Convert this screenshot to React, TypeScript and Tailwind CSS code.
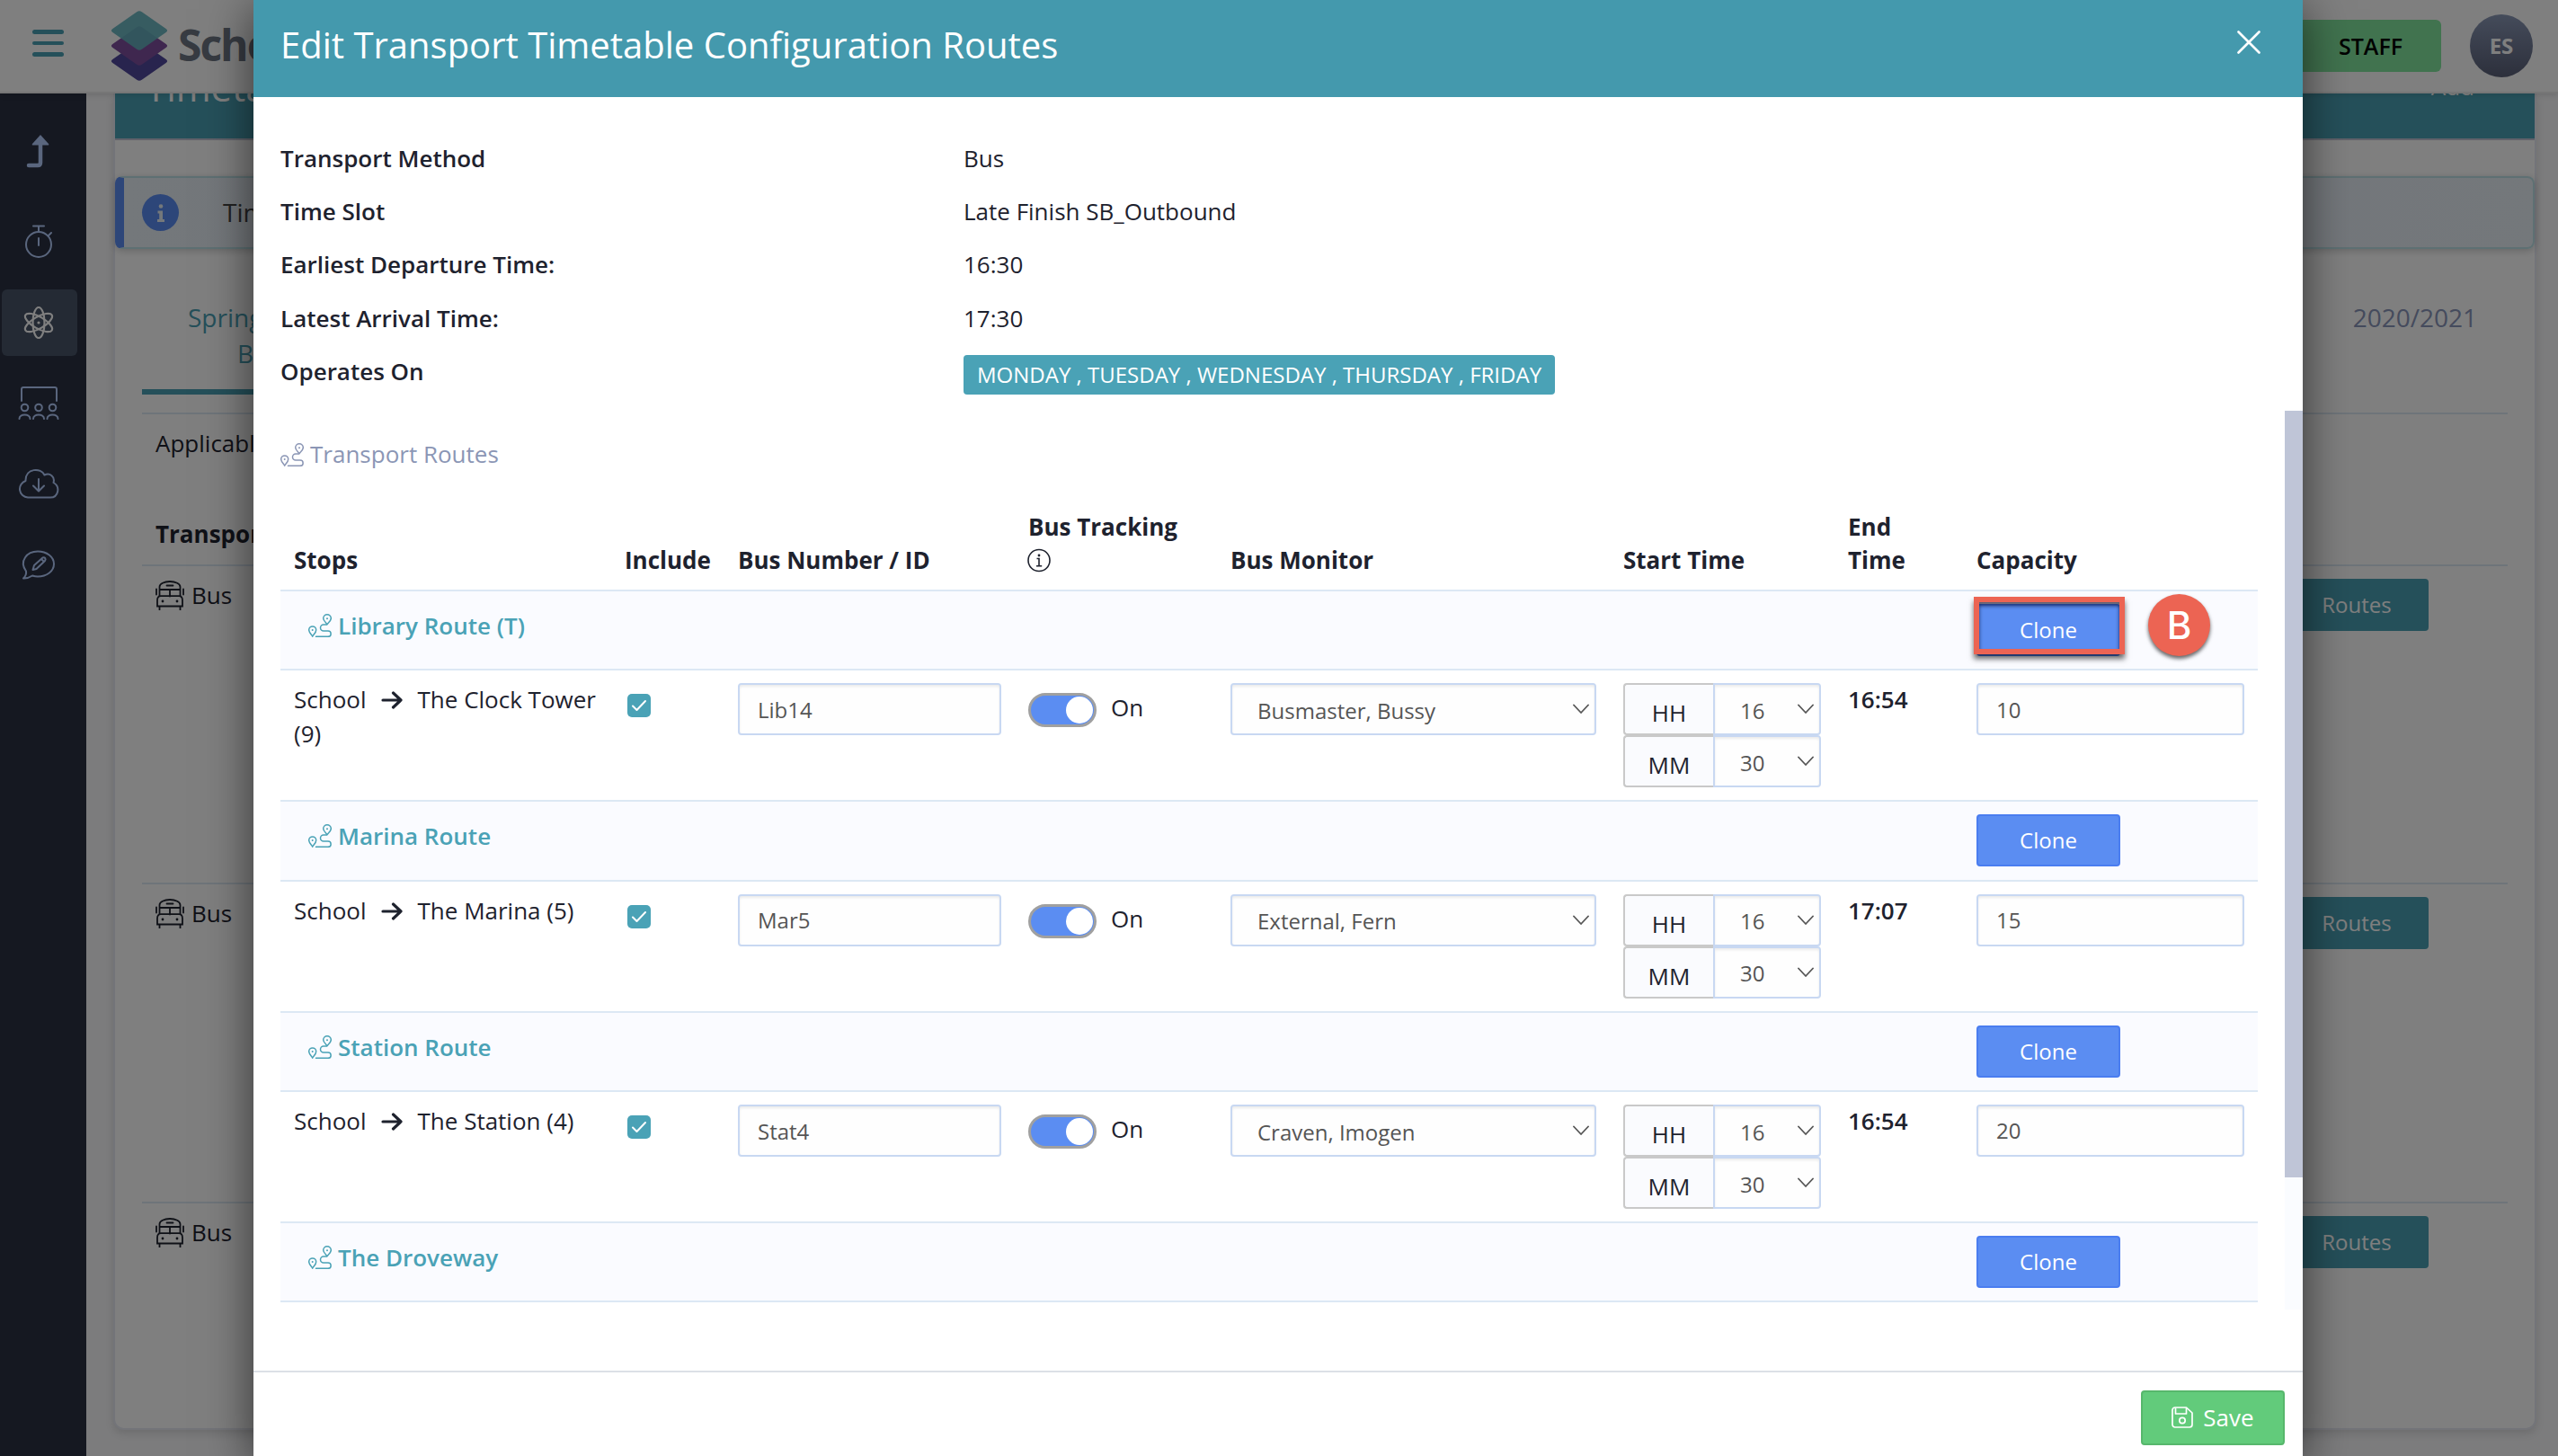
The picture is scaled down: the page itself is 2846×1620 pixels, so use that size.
import React from 'react';

type Stop = {
  to: string;
  busId: string;
  monitor: string;
  hour: string;
  minute: string;
  endTime: string;
  capacity: string;
};

type Route = { name: string; highlighted?: boolean; stop?: Stop };

const details = [
  { label: 'Transport Method', value: 'Bus' },
  { label: 'Time Slot', value: 'Late Finish SB_Outbound' },
  { label: 'Earliest Departure Time:', value: '16:30' },
  { label: 'Latest Arrival Time:', value: '17:30' },
];

const routes: Route[] = [
  {
    name: 'Library Route (T)',
    highlighted: true,
    stop: { to: 'The Clock Tower (9)', busId: 'Lib14', monitor: 'Busmaster, Bussy', hour: '16', minute: '30', endTime: '16:54', capacity: '10' },
  },
  {
    name: 'Marina Route',
    stop: { to: 'The Marina (5)', busId: 'Mar5', monitor: 'External, Fern', hour: '16', minute: '30', endTime: '17:07', capacity: '15' },
  },
  {
    name: 'Station Route',
    stop: { to: 'The Station (4)', busId: 'Stat4', monitor: 'Craven, Imogen', hour: '16', minute: '30', endTime: '16:54', capacity: '20' },
  },
  { name: 'The Droveway' },
];

const columns = 'grid grid-cols-[369px_125px_323px_225px_437px_250px_143px_328px]';

function RouteIcon() {
  return (
    <svg viewBox="0 0 26 26" fill="none" stroke="currentColor" strokeWidth="1.5" strokeLinecap="round" className="w-[26px] h-[26px] shrink-0">
      <path d="M21 11.6c-1.6-2-4.3-4-4.3-6.5a4.3 4.3 0 018.6 0c0 2.500-2.700 4.500-4.300 6.500z" />
      <path d="M4.700 25c-1.500-2.300-4-4.300-4-7.100a4 4 0 018 0c0 2.800-2.500 4.800-4 7.100z" />
      <circle cx="21" cy="5.200" r="1" fill="currentColor" stroke="none" />
      <circle cx="4.700" cy="18" r="1" fill="currentColor" stroke="none" />
      <path d="M20.500 12h-3.500a3.500 3.500 0 000 7h5a3.150 3.150 0 010 6.300h-13.500" />
    </svg>
  );
}

function ArrowIcon() {
  return (
    <svg viewBox="0 0 24 20" fill="none" stroke="currentColor" strokeWidth="3.200" strokeLinecap="round" strokeLinejoin="round" className="inline-block w-6 h-5 ml-4 mr-[17px] -mt-1">
      <path d="M2 10h20M13.500 2l8.500 8-8.500 8" />
    </svg>
  );
}

function ChevronIcon() {
  return (
    <svg viewBox="0 0 18 12" fill="none" stroke="#555" strokeWidth="1.800" strokeLinecap="round" strokeLinejoin="round" className="w-[18px] h-3">
      <path d="M1 1.500l8 8.500 8-8.500" />
    </svg>
  );
}

function BusIcon() {
  return (
    <svg viewBox="0 0 32 33" fill="none" stroke="currentColor" strokeWidth="1.800" strokeLinecap="round" className="w-8 h-[33px]">
      <path d="M4.500 17V7c0-3.500 5-6 11.500-6s11.500 2.500 11.500 6v10M4.500 10h23M16 10v7.500M12.500 5.500h7" />
      <path d="M2 28.500V22c0-3 1.500-4.800 4-4.800h20c2.500 0 4 1.800 4 4.800v6.500zM4.500 28.500v4M27.500 28.500v4M1 9.500v6M31 9.500v6" />
      <circle cx="8" cy="23" r="1.400" fill="currentColor" stroke="none" />
      <circle cx="24" cy="23" r="1.400" fill="currentColor" stroke="none" />
    </svg>
  );
}

function SaveIcon() {
  return (
    <svg viewBox="0 0 24 24" fill="none" stroke="currentColor" strokeWidth="1.700" strokeLinejoin="round" className="w-6 h-6">
      <path d="M4 1h12.500L23 7v13a3 3 0 01-3 3H4a3 3 0 01-3-3V4a3 3 0 013-3z" />
      <path d="M4.500 1.500v6.500h12V1.500" />
      <circle cx="12" cy="15.500" r="3.200" />
    </svg>
  );
}

function Logo() {
  return (
    <svg viewBox="0 0 64 78" className="w-16 h-[78px]">
      <rect x="-23" y="-23" width="46" height="46" rx="4" fill="#51489c" transform="translate(32 56) scale(1 .7) rotate(45)" />
      <rect x="-23" y="-23" width="46" height="46" rx="4" fill="#7f4f9f" transform="translate(32 39) scale(1 .7) rotate(45)" />
      <rect x="-23" y="-23" width="46" height="46" rx="4" fill="#62b3bd" fillOpacity=".92" transform="translate(32 22) scale(1 .7) rotate(45)" />
    </svg>
  );
}

function Sidebar() {
  const icon = 'w-[46px] h-[46px]';
  return (
    <nav className="w-24 shrink-0 bg-[#2a3042] text-[#b4cdfc] flex flex-col">
      <a className="h-[128px] w-[86px] flex items-center justify-center">
        <svg viewBox="0 0 46 46" className={icon}>
          <path d="M12 39h10q3 0 3-3V15" fill="none" stroke="currentColor" strokeWidth="4.500" strokeLinecap="round" />
          <path d="M25 5l9 10q1 1.500-1 1.500H17q-2 0-1-1.500z" fill="currentColor" />
        </svg>
      </a>
      <a className="-mt-px h-[76px] w-[86px] flex items-center justify-center">
        <svg viewBox="0 0 46 46" fill="none" stroke="currentColor" strokeWidth="2" strokeLinecap="round" className={icon}>
          <circle cx="23" cy="26" r="14" />
          <path d="M17 5.500h12M23 5.500V12M23 19v8M33.500 16.500l3.500-3.500" />
        </svg>
      </a>
      <a className="mt-[15px] ml-0.5 h-[74px] w-[84px] rounded-md bg-[#485468] text-white flex items-center justify-center">
        <svg viewBox="0 0 46 46" fill="none" stroke="currentColor" strokeWidth="2.200" className={`${icon} -ml-0.5`}>
          <ellipse cx="23" cy="23" rx="6.500" ry="17" />
          <ellipse cx="23" cy="23" rx="6.500" ry="17" transform="rotate(60 23 23)" />
          <ellipse cx="23" cy="23" rx="6.500" ry="17" transform="rotate(120 23 23)" />
          <circle cx="23" cy="23" r="1.600" fill="currentColor" stroke="none" />
        </svg>
      </a>
      <a className="mt-2 h-[90px] w-[86px] flex items-center justify-center">
        <svg viewBox="0 0 46 46" fill="none" stroke="currentColor" strokeWidth="2" strokeLinecap="round" className={icon}>
          <path d="M4 20V7q0-2 2-2h35q2 0 2 2v13M1.500 40c0-6 12-6 12 0M17 40c0-6 12-6 12 0M32.500 40c0-6 12-6 12 0" />
          <circle cx="7.500" cy="27.500" r="3.800" />
          <circle cx="23" cy="27.500" r="3.800" />
          <circle cx="38.500" cy="27.500" r="3.800" />
        </svg>
      </a>
      <a className="-mt-px h-[90px] w-[86px] flex items-center justify-center">
        <svg viewBox="0 0 46 46" fill="none" stroke="currentColor" strokeWidth="2" strokeLinecap="round" strokeLinejoin="round" className={icon}>
          <path d="M11 38.500A9.500 9.500 0 018.500 20C8 5.500 26 5 29.500 13.500c6-3 12 2 10 8.500 8 4.500 5.500 16.500-3.500 16.500zM23 18v13M17 25.500l6 6 6-6" />
        </svg>
      </a>
      <a className="mt-px h-[90px] w-[86px] flex items-center justify-center">
        <svg viewBox="0 0 46 46" fill="none" stroke="currentColor" strokeWidth="2" strokeLinecap="round" strokeLinejoin="round" className={icon}>
          <path d="M6 37.500c2.500-2.500 3.500-5 3-8C1 18 10 7.500 22 7.500c10 0 18 6 18 14s-8 14-18 14c-2.500 0-4-.4-6-1-3 2-6 3.200-10 3z" />
          <path d="M16.500 28l1.500-5 9.500-8.500c2.500-1 4 1.500 2.500 3.500L20.500 27zM26 16l2.500 2.500" />
        </svg>
      </a>
    </nav>
  );
}

function TopHeader() {
  return (
    <header className="relative z-10 h-[104px] shrink-0 flex items-center bg-white border-b-2 border-[#ececec] shadow-[0_2px_6px_rgba(0,0,0,0.12)]">
      <div className="ml-9 mt-[-6px] flex flex-col gap-2">
        <span className="w-[35px] h-[4.500px] rounded-full bg-[#4ba1b5]" />
        <span className="w-[35px] h-[4.500px] rounded-full bg-[#4ba1b5]" />
        <span className="w-[35px] h-[4.500px] rounded-full bg-[#4ba1b5]" />
      </div>
      <div className="ml-[52px] flex items-center gap-[11px]">
        <Logo />
        <span className="text-[48px] leading-none font-bold tracking-[-2px] text-[#6f7684] -mt-0.5">School</span>
      </div>
      <div className="ml-auto mr-7 flex items-center">
        <span className="h-[58px] w-[200px] pl-[86px] rounded-md bg-[#82e69e] text-black text-[25px] font-semibold leading-[58px]">STAFF</span>
        <span className="ml-8 size-[70px] rounded-full bg-linear-to-b from-[#8a98b6] to-[#5a6078] text-white text-[24px] font-bold leading-[70px] text-center">ES</span>
      </div>
    </header>
  );
}

function BackgroundPage() {
  return (
    <div className="h-[1620px] w-[2846px] overflow-hidden flex flex-col bg-[#f8f8fa]">
      <TopHeader />
      <div className="flex-1 flex min-h-0">
        <Sidebar />
        <main className="ml-[30px] w-[2696px] h-[1487px] rounded-b-xl border-x-2 border-b-2 border-[#e6e8f2] bg-white shadow-[0_4px_10px_rgba(0,0,0,0.12)]">
          <div className="h-[52px] border-b-2 border-[#c2c4d4] bg-[#4ba1b5] text-white flex justify-between overflow-hidden">
            <h2 className="ml-[34px] -mt-[34px] text-[42px] leading-[54px] font-medium">Timetable</h2>
            <span className="mr-[67px] -mt-[26px] text-[26px] leading-[36px]">+&nbsp;&nbsp;Add</span>
          </div>
          <div className="mt-10 h-[81px] flex items-center rounded-lg border-2 border-l-[10px] border-[#bce0e6] border-l-[#5b8df2] bg-linear-to-r from-[#e8f0f6] via-[#e4e8f8] to-[#e8f0f6] shadow-[0_2px_8px_rgba(0,0,0,0.2)]">
            <span className="ml-5 size-[41px] rounded-full bg-[#5b8df2] text-[#e8f0f6] flex items-center justify-center">
              <svg viewBox="0 0 10 20" fill="currentColor" className="w-[10px] h-5">
                <circle cx="5" cy="2.500" r="2.300" />
                <path d="M1.500 7.500h5.500v9.500h2v3H1v-3h2.200v-6.500H1.500z" />
              </svg>
            </span>
            <span className="ml-[49px] -mt-0.5 text-[28px] text-[#444]">Time</span>
          </div>
          <div className="mx-[30px]">
            <div className="flex items-start justify-between text-[28px] leading-10">
              <div className="h-[162px] w-[270px] pt-[56px] pl-[51px] border-b-[6px] border-[#4ba1b5] text-[#4ba1b5]">
                <p>Spring</p>
                <p className="pl-[55px]">Bus</p>
              </div>
              <p className="mt-[56px] mr-[34px] text-[#8a96ba]">2020/2021</p>
            </div>
            <div className="mt-5 h-[169px] border-t-2 border-[#dce8f4] pl-[15px] text-[26px] leading-[37px] text-[#1e222e]">
              <p className="pt-[14px]">Applicable</p>
              <p className="mt-[64px] font-bold">Transport</p>
            </div>
            {[0, 1, 2].map(i => (
              <div key={i} className="h-[354.330px] border-t-2 border-[#dce8f4] pl-[15px] pt-[14px] pr-[88px] flex items-start justify-between text-[#1e222e]">
                <div className="mt-px flex items-center gap-2 text-[26px] leading-[35px]">
                  <BusIcon />
                  Bus
                </div>
                <span className="w-[160px] h-[58px] rounded bg-[#4ba1b5] text-white text-[24px] leading-[58px] text-center">Routes</span>
              </div>
            ))}
          </div>
        </main>
      </div>
    </div>
  );
}

function CloneButton({ highlighted }: { highlighted?: boolean }) {
  return (
    <div className="relative w-[160px]">
      <button className="block w-[160px] h-[58px] rounded bg-[#5b8df2] border-2 border-[#4a7df0] text-white text-[24px] leading-none text-center">Clone</button>
      {highlighted && (
        <>
          <span className="absolute -top-2 -left-[3px] w-[168px] h-16 border-[6px] border-[#ec6453] shadow-[0_5px_6px_rgba(0,0,0,0.6),inset_0_4px_4px_rgba(0,0,30,0.65)]" />
          <span
            className="absolute -top-[11px] left-[191px] size-[69px] rounded-full bg-[#ec6453] text-white text-[42px] leading-[69px] font-medium text-center shadow-[0_3px_4px_rgba(0,0,0,0.6)]"
            style={{ fontFamily: 'Inter, sans-serif' }}
          >
            B
          </span>
        </>
      )}
    </div>
  );
}

const field = 'h-[58px] rounded border-2 border-[#c8d8f2] bg-[#fefefe] shadow-[inset_0_2px_3px_rgba(0,0,0,0.08)] text-[24px] text-[#555] flex items-center';

function TimeField({ unit, value }: { unit: string; value: string }) {
  return (
    <div className="flex w-[220px]">
      <span className="w-[100px] h-[58px] pt-1.5 rounded-l border-2 border-r-0 border-[#c9c9c9] bg-[#fafbfe] text-[26px] leading-[51px] text-center">{unit}</span>
      <div className={`${field} w-[120px] rounded-l-none pl-7 pr-1.5 justify-between`}>
        <span className="pt-[3px]">{value}</span>
        <ChevronIcon />
      </div>
    </div>
  );
}

function StopRow({ stop }: { stop: Stop }) {
  return (
    <div className={`${columns} h-[146px] border-b-2 border-[#dce8f4] pt-[14px] text-[26px] leading-[37.500px]`}>
      <div className="pl-[15px] pr-2">
        School
        <ArrowIcon />
        {stop.to}
      </div>
      <div className="pl-[17px] pt-3">
        <span className="size-[26px] rounded-[5px] bg-[#4aa2b6] flex items-center justify-center">
          <svg viewBox="0 0 18 14" fill="none" stroke="#fff" strokeWidth="2" strokeLinecap="round" strokeLinejoin="round" className="w-[18px] h-[14px]">
            <path d="M2 7.500l4.500 4.500L16 2" />
          </svg>
        </span>
      </div>
      <div className="px-[15px]">
        <div className={`${field} pl-5 pt-px`}>{stop.busId}</div>
      </div>
      <div className="pl-[15px] pt-[11px] flex items-start">
        <span className="w-[76px] h-[38px] rounded-full border-[3px] border-[#a0a0a0] bg-[#5b8df2] flex items-center justify-end">
          <span className="size-[30px] mr-px rounded-full bg-white" />
        </span>
        <span className="ml-4 -mt-0.5">On</span>
      </div>
      <div className="px-[15px]">
        <div className={`${field} pl-7 pr-1.5 justify-between`}>
          <span className="pt-[3px]">{stop.monitor}</span>
          <ChevronIcon />
        </div>
      </div>
      <div className="pl-[15px]">
        <TimeField unit="HH" value={stop.hour} />
        <TimeField unit="MM" value={stop.minute} />
      </div>
      <div className="pl-[15px] font-semibold">{stop.endTime}</div>
      <div className="px-[15px]">
        <div className={`${field} pl-5`}>{stop.capacity}</div>
      </div>
    </div>
  );
}

function RoutesTable() {
  return (
    <div className="w-[2200px] text-[26px] leading-[37px]">
      <div className={`${columns} h-[134px] items-end pb-[14px] border-b-2 border-[#dce8f4] font-bold *:pl-[15px]`}>
        <span>Stops</span>
        <span className="-ml-px">Include</span>
        <span>Bus Number / ID</span>
        <span>
          Bus Tracking
          <svg viewBox="0 0 26 26" fill="none" stroke="currentColor" strokeWidth="1.600" className="w-[26px] h-[37px] -ml-px">
            <circle cx="13" cy="13" r="12" />
            <path d="M10.500 11H13v8M10 19.300h6.200" />
            <circle cx="13" cy="7.500" r="1.400" fill="currentColor" stroke="none" />
          </svg>
        </span>
        <span>Bus Monitor</span>
        <span>Start Time</span>
        <span className="w-[100px]">End Time</span>
        <span>Capacity</span>
      </div>
      {routes.map(route => (
        <React.Fragment key={route.name}>
          <div className={`${columns} h-[88.330px] border-b-2 border-[#dce8f4] bg-[#fafbff]`}>
            <div className="col-span-7 pl-[31px] pt-5 flex items-start gap-[7px] font-semibold text-[#4aa2b6]">
              <span className="pt-[5px]">
                <RouteIcon />
              </span>
              {route.name}
            </div>
            <div className="pl-[15px] pt-[14px]">
              <CloneButton highlighted={route.highlighted} />
            </div>
          </div>
          {route.stop && <StopRow stop={route.stop} />}
        </React.Fragment>
      ))}
    </div>
  );
}

function EditRoutesModal() {
  return (
    <section className="ml-[282px] w-[2280px] h-full bg-white flex flex-col text-[#1e222e] shadow-[0_10px_50px_rgba(0,0,0,0.6)]">
      <div className="h-[108px] shrink-0 bg-[#4499ad] text-white flex items-start justify-between pl-[30px] pr-[47px]">
        <h1 className="pt-[23px] text-[40px] leading-[54px]">Edit Transport Timetable Configuration Routes</h1>
        <svg viewBox="0 0 26 26" stroke="currentColor" strokeWidth="2.600" strokeLinecap="round" className="w-[26px] h-[26px] mt-[34px]">
          <path d="M1.500 1.500l23 23M24.500 1.500l-23 23" />
        </svg>
      </div>
      <dl className="mt-[39px] h-[310px] shrink-0 pl-[30px] text-[26px]">
        {details.map(({ label, value }) => (
          <div key={label} className="h-[59.200px] flex items-center">
            <dt className="w-[760px] font-semibold">{label}</dt>
            <dd>{value}</dd>
          </div>
        ))}
        <div className="h-[59.200px] flex items-center">
          <dt className="w-[760px] font-semibold">Operates On</dt>
          <dd className="mt-[7px] h-11 px-[15px] rounded bg-[#4aa2b6] text-white text-[24px] leading-[43px] whitespace-nowrap">
            MONDAY , TUESDAY , WEDNESDAY , THURSDAY , FRIDAY
          </dd>
        </div>
      </dl>
      <div className="h-[1000px] shrink-0 flex">
        <div className="flex-1 pl-[30px] pt-[30px]">
          <h3 className="h-[37px] flex items-center gap-[7px] text-[26px] text-[#8b96b5]">
            <RouteIcon />
            Transport Routes
          </h3>
          <RoutesTable />
        </div>
        <div className="w-5 bg-[#fafcff]">
          <div className="h-[853px] bg-[#bfc5d7]" />
        </div>
      </div>
      <footer className="mt-[68px] flex-1 border-t-2 border-[#dce0e6] pt-5 pr-5 flex justify-end items-start">
        <button className="w-[160px] h-[61px] pb-px rounded border-2 border-[#57b76c] bg-[#62cb7b] text-white text-[26px] leading-none flex items-center justify-center gap-[11px]">
          <SaveIcon />
          Save
        </button>
      </footer>
    </section>
  );
}

export default function App() {
  return (
    <div className="relative h-[1620px] w-[2846px] overflow-hidden" style={{ fontFamily: '"Open Sans", sans-serif' }}>
      <BackgroundPage />
      <div className="absolute inset-0 z-20 bg-black/50">
        <EditRoutesModal />
      </div>
    </div>
  );
}
